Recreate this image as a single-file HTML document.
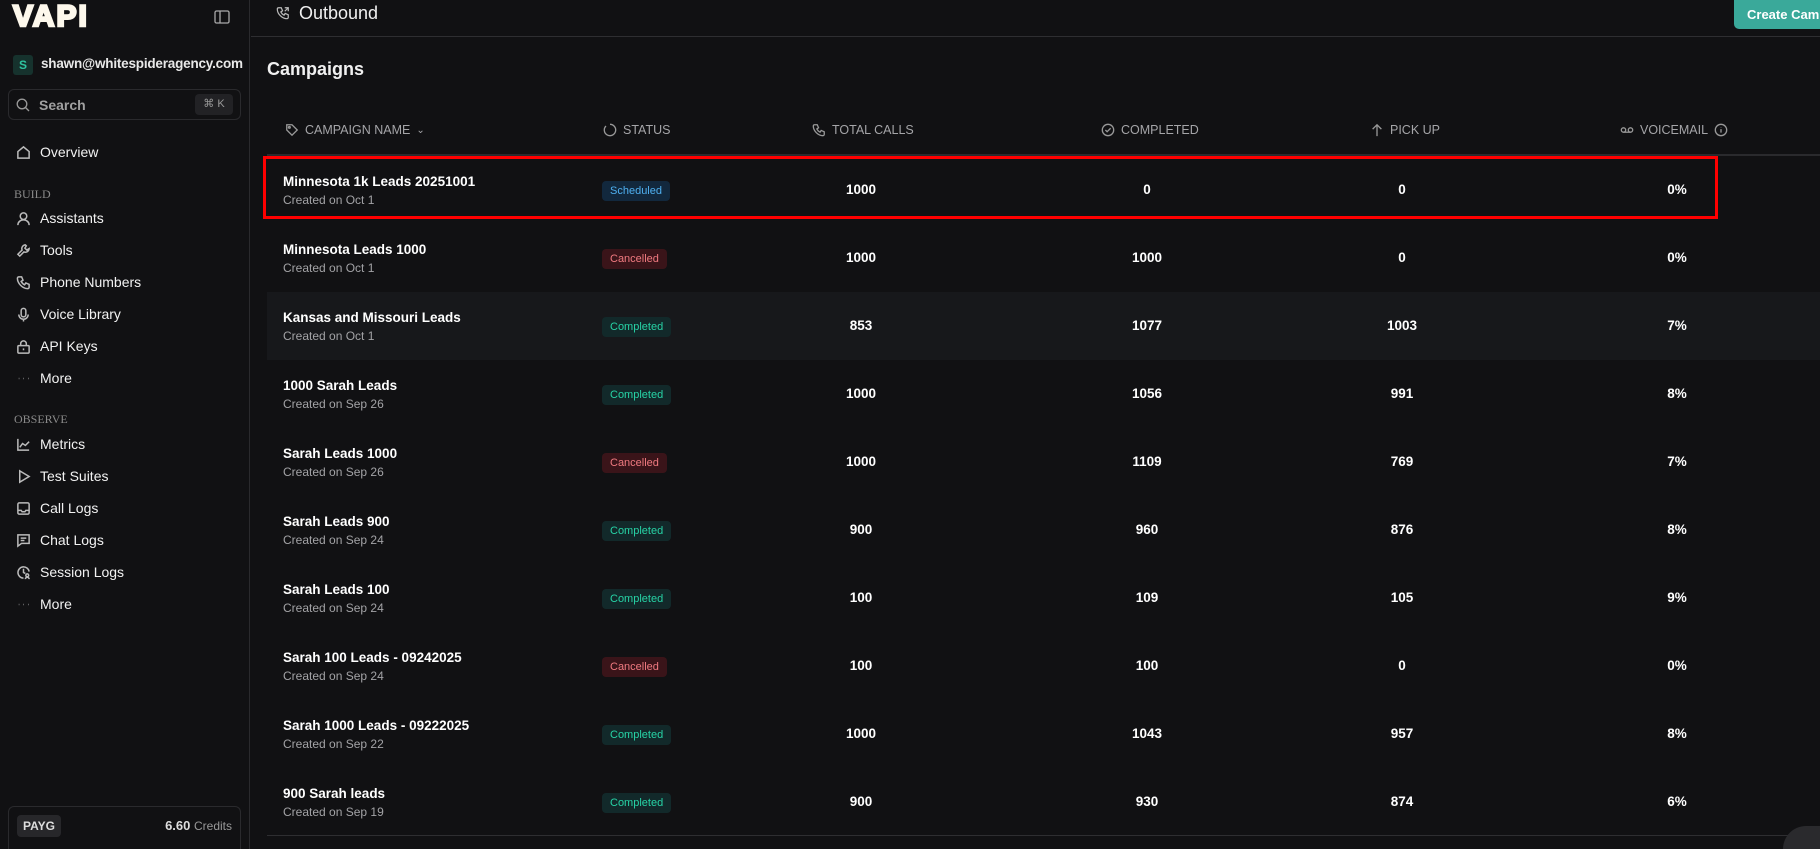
<!DOCTYPE html>
<html style="width:1820px;height:849px;overflow:hidden"><head><meta charset="utf-8"><style>
*{box-sizing:border-box;margin:0;padding:0}
body{width:1820px;height:849px;overflow:hidden;background:#111113;font-family:"Liberation Sans",sans-serif;color:#fff;position:relative}
.sb{position:absolute;left:0;top:0;width:250px;height:849px;border-right:1px solid #2a2a2d;background:#111113;overflow:hidden}
.nav{position:absolute;left:16px;font-size:14px;color:#f2f2f2;display:flex;align-items:center}
.nav svg{width:15px;height:15px;margin-right:9px;stroke:#bbb;fill:none;stroke-width:1.6}
.sec{position:absolute;left:14px;font-size:12px;color:#8a8a8a;font-family:"Liberation Serif",serif}
.hdr{position:absolute;left:251px;top:0;right:0;height:37px;border-bottom:1px solid #2e2e31}
.th{position:absolute;top:123px;font-size:12.5px;color:#a5a5a8;display:flex;align-items:center}
.th svg{width:14px;height:14px;stroke:#999;fill:none;stroke-width:1.5;margin-right:6px}
.row{position:absolute;left:267px;width:1553px;height:68px}
.nm{position:absolute;left:16px;top:18px;font-size:13.5px;font-weight:bold}
.cr{position:absolute;left:16px;top:37px;font-size:12px;color:#a3a3a6}
.bd{position:absolute;left:335px;top:25px;height:20px;padding:0 8px;border-radius:4px;font-size:11px;line-height:20px}
.sch{background:#12283d;color:#4fb0f0}.can{background:#3a1419;color:#f07a80}.com{background:#12292a;color:#27d3a6}
.n{position:absolute;top:26px;font-size:13.5px;font-weight:bold;transform:translateX(-50%)}
</style></head><body>
<div class="sb">
<div style="position:absolute;left:13px;top:3px;font-size:30px;font-weight:900;letter-spacing:2px;color:#fdf8ec;-webkit-text-stroke:2.5px #fdf8ec;line-height:28px">VAPI</div>
<svg style="position:absolute;left:214px;top:9px" width="16" height="16" viewBox="0 0 16 16" fill="none" stroke="#aaa" stroke-width="1.3"><rect x="1" y="2" width="14" height="12" rx="1.5"/><line x1="6" y1="2" x2="6" y2="14"/></svg>
<div style="position:absolute;left:13px;top:55px;width:20px;height:20px;background:#16322d;border-radius:3px;color:#2fc3a0;font-size:12px;font-weight:bold;text-align:center;line-height:20px">S</div>
<div style="position:absolute;left:41px;top:56px;font-size:13.5px;font-weight:bold;color:#e8e8e8;letter-spacing:-0.2px">shawn@whitespideragency.com</div>
<div style="position:absolute;left:8px;top:89px;width:233px;height:31px;border:1px solid #2a2a2d;border-radius:6px">
<svg style="position:absolute;left:7px;top:8px" width="14" height="14" viewBox="0 0 14 14" fill="none" stroke="#999" stroke-width="1.3"><circle cx="6" cy="6" r="4.8"/><line x1="9.5" y1="9.5" x2="13" y2="13"/></svg>
<span style="position:absolute;left:30px;top:7px;font-size:14px;color:#a0a0a0;font-weight:bold">Search</span>
<span style="position:absolute;right:7px;top:4px;width:38px;height:21px;background:#222225;border-radius:4px;font-size:11px;color:#999;text-align:center;line-height:21px">⌘ K</span></div>
<div class="nav" style="top:144px"><svg viewBox="0 0 16 16"><path d="M2 14V7l6-5 6 5v7z"/></svg>Overview</div>
<div class="sec" style="top:187px">BUILD</div>
<div class="nav" style="top:210px"><svg viewBox="0 0 16 16"><circle cx="8" cy="5.5" r="3.5"/><path d="M2 15c0-3.5 3-5.5 6-5.5s6 2 6 5.5"/></svg>Assistants</div>
<div class="nav" style="top:242px"><svg viewBox="0 0 16 16"><path d="M10 2a4 4 0 0 0-3.5 5.5L2 12l2 2 4.5-4.5A4 4 0 0 0 14 6l-2.5 1.5-2-2L11 3z"/></svg>Tools</div>
<div class="nav" style="top:274px"><svg viewBox="0 0 16 16"><path d="M3 2h3l1.5 3.5-2 1.3a8 8 0 0 0 3.7 3.7l1.3-2L14 10v3a1.5 1.5 0 0 1-1.5 1.5C7 14.5 1.5 9 1.5 3.5A1.5 1.5 0 0 1 3 2z"/></svg>Phone Numbers</div>
<div class="nav" style="top:306px"><svg viewBox="0 0 16 16"><rect x="5.5" y="1.5" width="5" height="9" rx="2.5"/><path d="M3 8a5 5 0 0 0 10 0M8 13v2.5"/></svg>Voice Library</div>
<div class="nav" style="top:338px"><svg viewBox="0 0 16 16"><rect x="2" y="7" width="12" height="8" rx="1"/><path d="M5 7V5a3 3 0 0 1 6 0v2M8 10v2"/></svg>API Keys</div>
<div class="nav" style="top:370px"><svg viewBox="0 0 16 16"><path d="M3 8h.5M8 8h.5M13 8h.5"/></svg>More</div>
<div class="sec" style="top:412px">OBSERVE</div>
<div class="nav" style="top:436px"><svg viewBox="0 0 16 16"><path d="M2 2v12h12M4 11l3-4 3 2 4-4"/></svg>Metrics</div>
<div class="nav" style="top:468px"><svg viewBox="0 0 16 16"><path d="M4 2l10 6-10 6z"/></svg>Test Suites</div>
<div class="nav" style="top:500px"><svg viewBox="0 0 16 16"><rect x="2" y="2" width="12" height="12" rx="1.5"/><path d="M2 10h3.5l1 1.5h3l1-1.5H14"/></svg>Call Logs</div>
<div class="nav" style="top:532px"><svg viewBox="0 0 16 16"><path d="M2 2h12v9H6l-4 3z"/><path d="M5 5.5h6M5 8h4"/></svg>Chat Logs</div>
<div class="nav" style="top:564px"><svg viewBox="0 0 16 16"><path d="M14 7a6 6 0 1 0-6 7"/><path d="M8 4v4l2 1"/><circle cx="12" cy="11" r="1.5"/><path d="M10 15a2 2 0 0 1 4 0"/></svg>Session Logs</div>
<div class="nav" style="top:596px"><svg viewBox="0 0 16 16"><path d="M3 8h.5M8 8h.5M13 8h.5"/></svg>More</div>
<div style="position:absolute;left:8px;top:806px;width:233px;height:50px;border:1px solid #2a2a2d;border-radius:6px">
<span style="position:absolute;left:8px;top:8px;width:44px;height:22px;background:#27272a;border-radius:4px;font-size:12px;font-weight:bold;color:#ddd;text-align:center;line-height:22px">PAYG</span>
<span style="position:absolute;right:8px;top:11px;font-size:13px;font-weight:bold;color:#ddd">6.60 <span style="font-weight:normal;color:#999;font-size:12px">Credits</span></span></div>
</div>
<div class="hdr">
<svg style="position:absolute;left:25px;top:6px" width="14" height="14" viewBox="0 0 16 16" fill="none" stroke="#bbb" stroke-width="1.4"><path d="M3 2h3l1.5 3.5-2 1.3a8 8 0 0 0 3.7 3.7l1.3-2L14 10v3a1.5 1.5 0 0 1-1.5 1.5C7 14.5 1.5 9 1.5 3.5A1.5 1.5 0 0 1 3 2zM10 2h4v4M14 2l-4 4"/></svg>
<div style="position:absolute;left:48px;top:3px;font-size:18px;color:#f0f0f0">Outbound</div>
<div style="position:absolute;left:1483px;top:0;width:100px;height:29px;background:#3aa99a;border-radius:0 0 0 5px;font-size:13px;font-weight:bold;color:#fff;padding:7px 0 0 13px;white-space:nowrap;overflow:hidden">Create Campaign</div>
</div>
<div style="position:absolute;left:267px;top:59px;font-size:18px;font-weight:bold;color:#f0f0f0">Campaigns</div>
<div class="th" style="left:285px"><svg viewBox="0 0 16 16"><path d="M2 2h6l6 6-6 6-6-6z"/><circle cx="5" cy="5" r="1"/></svg>CAMPAIGN NAME <span style="margin-left:6px;font-size:10px">⌄</span></div>
<div class="th" style="left:603px"><svg viewBox="0 0 16 16"><path d="M8 1.5a6.5 6.5 0 1 1-4.6 1.9"/></svg>STATUS</div>
<div class="th" style="left:812px"><svg viewBox="0 0 16 16"><path d="M3 2h3l1.5 3.5-2 1.3a8 8 0 0 0 3.7 3.7l1.3-2L14 10v3a1.5 1.5 0 0 1-1.5 1.5C7 14.5 1.5 9 1.5 3.5A1.5 1.5 0 0 1 3 2z"/></svg>TOTAL CALLS</div>
<div class="th" style="left:1101px"><svg viewBox="0 0 16 16"><circle cx="8" cy="8" r="6.5"/><path d="M5 8l2 2 4-4"/></svg>COMPLETED</div>
<div class="th" style="left:1370px"><svg viewBox="0 0 16 16"><path d="M8 15V2M3 7l5-5 5 5"/></svg>PICK UP</div>
<div class="th" style="left:1620px"><svg viewBox="0 0 16 16"><circle cx="4" cy="8" r="2.5"/><circle cx="12" cy="8" r="2.5"/><path d="M4 10.5h8"/></svg>VOICEMAIL <svg style="margin-left:6px" viewBox="0 0 16 16"><circle cx="8" cy="8" r="6.5"/><path d="M8 7v4M8 4.5v.5"/></svg></div>
<div style="position:absolute;left:267px;top:154px;width:1553px;height:2px;background:#2a2a2d"></div>
<div style="position:absolute;left:267px;top:292px;width:1553px;height:68px;background:#17181b"></div>
<div class="row" style="top:156px"><div class="nm">Minnesota 1k Leads 20251001</div><div class="cr">Created on Oct 1</div><div class="bd sch">Scheduled</div><div class="n" style="left:594px">1000</div><div class="n" style="left:880px">0</div><div class="n" style="left:1135px">0</div><div class="n" style="left:1410px">0%</div></div>
<div class="row" style="top:224px"><div class="nm">Minnesota Leads 1000</div><div class="cr">Created on Oct 1</div><div class="bd can">Cancelled</div><div class="n" style="left:594px">1000</div><div class="n" style="left:880px">1000</div><div class="n" style="left:1135px">0</div><div class="n" style="left:1410px">0%</div></div>
<div class="row" style="top:292px"><div class="nm">Kansas and Missouri Leads</div><div class="cr">Created on Oct 1</div><div class="bd com">Completed</div><div class="n" style="left:594px">853</div><div class="n" style="left:880px">1077</div><div class="n" style="left:1135px">1003</div><div class="n" style="left:1410px">7%</div></div>
<div class="row" style="top:360px"><div class="nm">1000 Sarah Leads</div><div class="cr">Created on Sep 26</div><div class="bd com">Completed</div><div class="n" style="left:594px">1000</div><div class="n" style="left:880px">1056</div><div class="n" style="left:1135px">991</div><div class="n" style="left:1410px">8%</div></div>
<div class="row" style="top:428px"><div class="nm">Sarah Leads 1000</div><div class="cr">Created on Sep 26</div><div class="bd can">Cancelled</div><div class="n" style="left:594px">1000</div><div class="n" style="left:880px">1109</div><div class="n" style="left:1135px">769</div><div class="n" style="left:1410px">7%</div></div>
<div class="row" style="top:496px"><div class="nm">Sarah Leads 900</div><div class="cr">Created on Sep 24</div><div class="bd com">Completed</div><div class="n" style="left:594px">900</div><div class="n" style="left:880px">960</div><div class="n" style="left:1135px">876</div><div class="n" style="left:1410px">8%</div></div>
<div class="row" style="top:564px"><div class="nm">Sarah Leads 100</div><div class="cr">Created on Sep 24</div><div class="bd com">Completed</div><div class="n" style="left:594px">100</div><div class="n" style="left:880px">109</div><div class="n" style="left:1135px">105</div><div class="n" style="left:1410px">9%</div></div>
<div class="row" style="top:632px"><div class="nm">Sarah 100 Leads - 09242025</div><div class="cr">Created on Sep 24</div><div class="bd can">Cancelled</div><div class="n" style="left:594px">100</div><div class="n" style="left:880px">100</div><div class="n" style="left:1135px">0</div><div class="n" style="left:1410px">0%</div></div>
<div class="row" style="top:700px"><div class="nm">Sarah 1000 Leads - 09222025</div><div class="cr">Created on Sep 22</div><div class="bd com">Completed</div><div class="n" style="left:594px">1000</div><div class="n" style="left:880px">1043</div><div class="n" style="left:1135px">957</div><div class="n" style="left:1410px">8%</div></div>
<div class="row" style="top:768px"><div class="nm">900 Sarah leads</div><div class="cr">Created on Sep 19</div><div class="bd com">Completed</div><div class="n" style="left:594px">900</div><div class="n" style="left:880px">930</div><div class="n" style="left:1135px">874</div><div class="n" style="left:1410px">6%</div></div>
<div style="position:absolute;left:267px;top:835px;width:1553px;height:1px;background:#2e2e31"></div>
<div style="position:absolute;left:263px;top:156px;width:1455px;height:63px;border:3px solid #ff0000"></div>
<div style="position:absolute;left:1783px;top:826px;width:37px;height:23px;border-radius:23px 0 0 0;background:#2a2a2d"></div>
</body></html>
